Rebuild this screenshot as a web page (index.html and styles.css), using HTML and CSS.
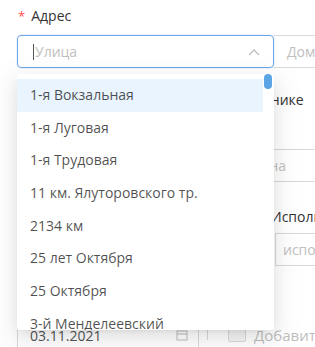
FILE: index.html
```html
<!DOCTYPE html>
<html lang="ru">
<head>
    <meta charset="UTF-8">
    <meta name="viewport" content="width=device-width, initial-scale=1.0">
    <title>Адрес</title>
    <link rel="stylesheet" href="styles.css">
</head>
<body>

<div class="form">
    <div class="form-label"><span class="req">*</span>Адрес</div>

    <div class="addr-row">
        <div class="select focused">
            <span class="caret"></span>
            <span class="placeholder">Улица</span>
            <svg class="arrow" width="12" height="8" viewBox="0 0 12 8">
                <polyline points="1,7 6,2 11,7" fill="none" stroke="#bfbfbf" stroke-width="1.4"/>
            </svg>

            <div class="dropdown">
                <div class="option active">1-я Вокзальная</div>
                <div class="option">1-я Луговая</div>
                <div class="option">1-я Трудовая</div>
                <div class="option">11 км. Ялуторовского тр.</div>
                <div class="option">2134 км</div>
                <div class="option">25 лет Октября</div>
                <div class="option">25 Октября</div>
                <div class="option">3-й Менделеевский</div>
                <div class="option">3-я Трудовая</div>
                <span class="scroll-thumb"></span>
            </div>
        </div>
        <div class="input house"><span class="ph">Дом</span></div>
    </div>

    <div class="note">Улица отсутствует в справочнике</div>

    <div class="input wide"><span class="ph">Улица, если не найдена</span></div>

    <div class="side">
        <div class="side-label">Исполнитель</div>
        <div class="input side-input"><span class="ph">исполнитель</span></div>
    </div>

    <div class="bottom-row">
        <div class="date">
            <span class="date-value">03.11.2021</span>
            <svg class="cal" width="12" height="12" viewBox="0 0 12 12">
                <rect x="1" y="2" width="10" height="9" fill="none" stroke="#bfbfbf" stroke-width="1"/>
                <line x1="1" y1="5" x2="11" y2="5" stroke="#bfbfbf" stroke-width="1"/>
            </svg>
        </div>
        <span class="sep"></span>
        <label class="check">
            <span class="box"></span>
            <span class="check-text">Добавить</span>
        </label>
    </div>
</div>

</body>
</html>
```

FILE: styles.css
```css
html, body {
    margin: 0;
    background: #fff;
    overflow: hidden;
}
body {
    font-family: 'Open Sans', 'Noto Sans', sans-serif;
    font-size: 14px;
    color: rgba(0, 0, 0, 0.85);
    width: 315px;
    height: 347px;
}
.form {
    width: 480px;
    padding-left: 17px;
}
.form-label {
    height: 22px;
    line-height: 22px;
    margin-top: 5px;
    margin-bottom: 8px;
    color: #333;
}
.req {
    color: #ff4d4f;
    margin: 0 6px 0 1px;
    font-size: 13px;
}
.addr-row {
    display: flex;
    height: 33px;
}
.select {
    position: relative;
    box-sizing: border-box;
    width: 257px;
    height: 33px;
    border: 1px solid #d9d9d9;
    border-radius: 4px;
    display: flex;
    align-items: center;
    padding-left: 15px;
    z-index: 2;
}
.select.focused {
    border-color: #6fa6ea;
    box-shadow: 0 0 0 1px rgba(24, 144, 255, 0.08);
}
.caret {
    width: 1px;
    height: 16px;
    background: #555;
    margin-right: 1px;
}
.placeholder {
    color: #bfbfbf;
}
.arrow {
    position: absolute;
    right: 13px;
    top: 12px;
}
.input {
    box-sizing: border-box;
    border: 1px solid #d9d9d9;
    height: 33px;
    display: flex;
    align-items: center;
    padding-left: 11px;
}
.ph {
    color: #bfbfbf;
    white-space: nowrap;
}
.house {
    width: 120px;
    margin-left: -1px;
    padding-left: 13px;
    border-left-color: transparent;
}

/* dropdown */
.dropdown {
    position: absolute;
    top: 38px;
    left: -1px;
    width: 257px;
    height: 256px;
    box-sizing: border-box;
    padding: 5px 0 4px;
    background: #fff;
    border-radius: 2px;
    box-shadow: 0 3px 6px -4px rgba(0, 0, 0, 0.12), 0 6px 16px 0 rgba(0, 0, 0, 0.08), 0 9px 28px 8px rgba(0, 0, 0, 0.05);
    overflow: hidden;
}
.option {
    height: 32.7px;
    line-height: 32.7px;
    padding-left: 13px;
    margin-right: 11px;
    color: rgba(0, 0, 0, 0.7);
    white-space: nowrap;
}
.option.active {
    background: #e9f4fe;
}
.scroll-thumb {
    position: absolute;
    right: 2px;
    top: 0;
    width: 8px;
    height: 15px;
    border-radius: 4px;
    background: #5ba5e6;
}

/* content behind the dropdown */
.note {
    height: 22px;
    line-height: 22px;
    margin-top: 21px;
    padding-left: 58px;
    color: #333;
    white-space: nowrap;
}
.wide {
    margin-top: 38px;
    width: 400px;
    padding-left: 105px;
}
.side {
    margin-left: 254px;
    margin-top: 24px;
}
.side-label {
    height: 22px;
    line-height: 22px;
    color: #333;
}
.side-input {
    margin-top: 5px;
    margin-left: 4px;
    width: 140px;
    padding-left: 7px;
}
.bottom-row {
    display: flex;
    align-items: center;
    margin-top: 53px;
    height: 32px;
}
.date {
    box-sizing: border-box;
    width: 182px;
    height: 32px;
    border: 1px solid #d9d9d9;
    border-radius: 4px;
    display: flex;
    align-items: center;
    padding: 0 10px 0 12px;
}
.date-value {
    flex: 1;
    color: #555;
}
.sep {
    width: 1px;
    height: 10px;
    background: #d9d9d9;
    margin-left: 8px;
}
.check {
    display: flex;
    align-items: center;
    margin-left: 20px;
}
.box {
    width: 16px;
    height: 12px;
    border: 1px solid #d9d9d9;
    background: #f5f5f5;
    border-radius: 2px;
}
.check-text {
    margin-left: 8px;
    color: #bfbfbf;
    font-size: 15px;
}
```
